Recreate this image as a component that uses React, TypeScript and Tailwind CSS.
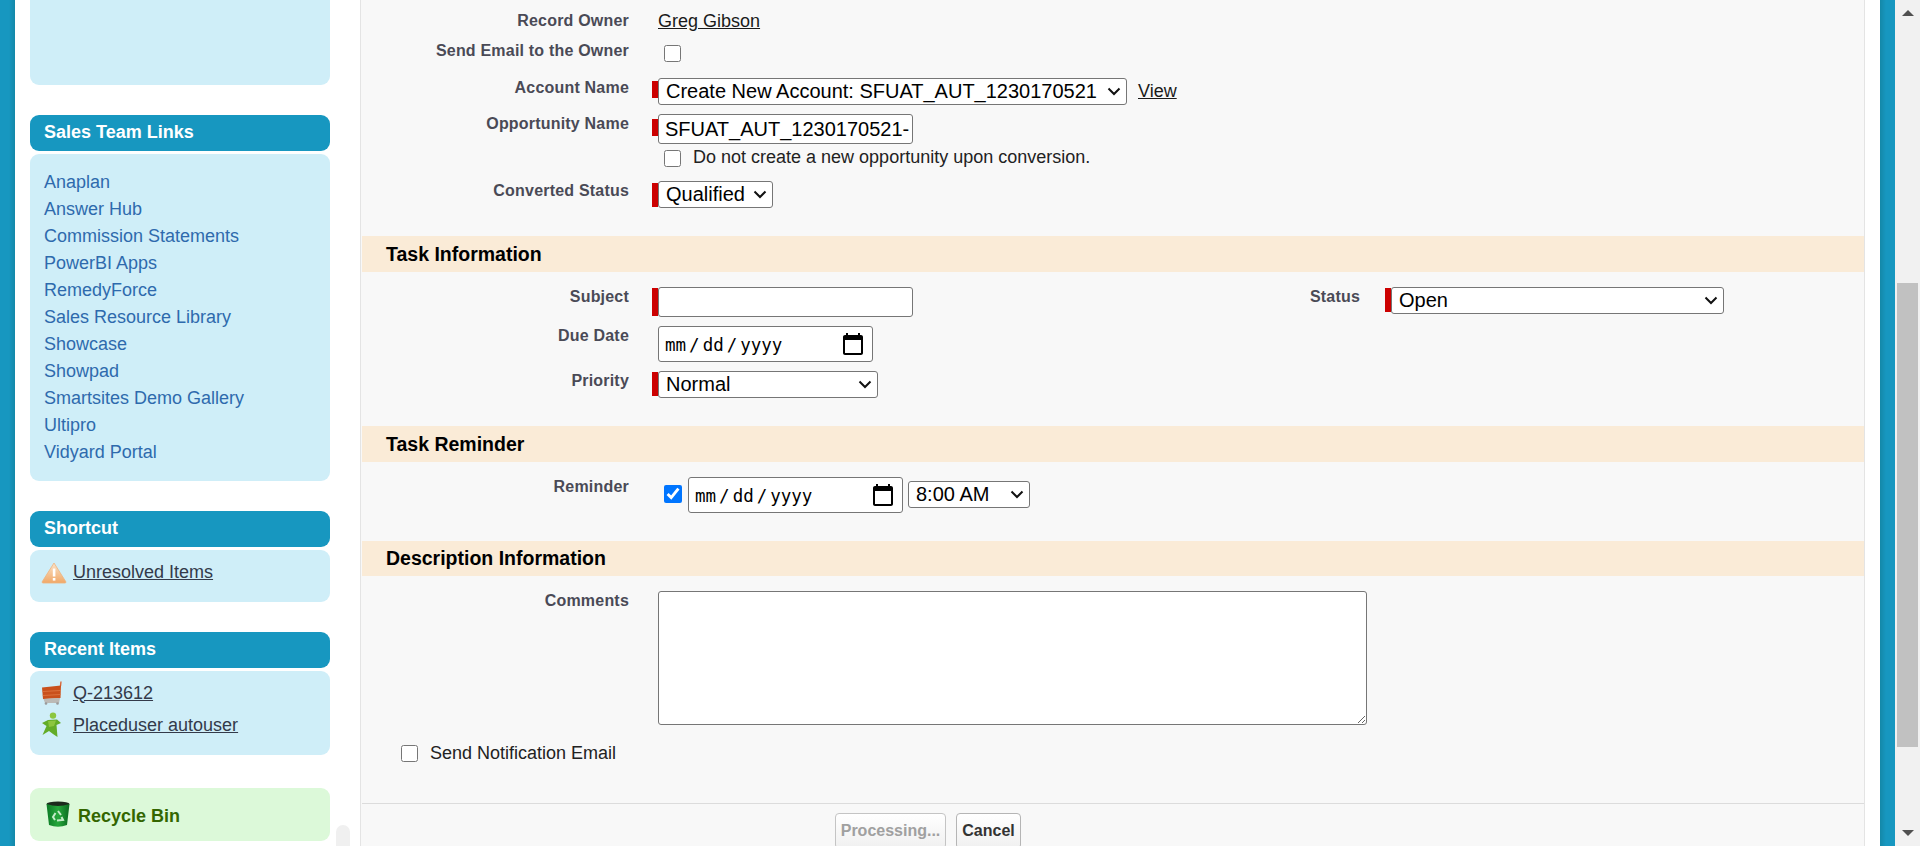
const links = [
  'Anaplan',
  'Answer Hub',
  'Commission Statements',
  'PowerBI Apps',
  'RemedyForce',
  'Sales Resource Library',
  'Showcase',
  'Showpad',
  'Smartsites Demo Gallery',
  'Ultipro',
  'Vidyard Portal',
];

const labelCls = 'shrink-0 text-right font-bold text-[16px] leading-[20px] text-[#4a4a56] tracking-[0.2px]';
const dateCls =
  "block bg-white border border-[#767676] rounded-[3px] text-[17.5px] text-black h-[36px] w-[215px] pl-[5px] pr-[6px] pt-[2px] font-['DejaVu_Sans_Mono',monospace] [&::-webkit-datetime-edit-text]:px-[2px] [&::-webkit-calendar-picker-indicator]:h-[26px] [&::-webkit-calendar-picker-indicator]:w-[26px] [&::-webkit-calendar-picker-indicator]:p-0";

const WarningIcon = () => (
  <svg width="26" height="22" viewBox="0 0 26 22" className="mt-[2px] shrink-0">
    <defs>
      <linearGradient id="warn" x1="0" y1="0" x2="0" y2="1">
        <stop offset="0" stopColor="#fbe3c8" />
        <stop offset="1" stopColor="#f0a868" />
      </linearGradient>
    </defs>
    <path d="M13 1 L25 20 Q25 21 24 21 L2 21 Q1 21 1 20 Z" fill="url(#warn)" stroke="#efb27c" strokeWidth="0.8" />
    <rect x="11.8" y="6.5" width="2.6" height="8" fill="#fff" />
    <rect x="11.8" y="16" width="2.6" height="2.6" fill="#fff" />
  </svg>
);

const CartIcon = () => (
  <svg width="22" height="24" viewBox="0 0 22 24" className="shrink-0">
    <path d="M20 0.5 L19.5 5" stroke="#d9683a" strokeWidth="1.4" />
    <path d="M1 6.5 L20 4.5 L19.5 17 L2 18 Z" fill="#c9501c" />
    <path d="M1.5 10.5 L19.8 9.5 M1.8 14.5 L19.6 13.5" stroke="#e27a45" strokeWidth="1" opacity="0.8" />
    <path d="M2.5 18 L19 17 L18 22 L4 22 Z" fill="#b9b4ae" opacity="0.9" />
    <circle cx="5" cy="22.5" r="1.3" fill="#9a9a9a" />
    <circle cx="16.5" cy="22.5" r="1.3" fill="#9a9a9a" />
  </svg>
);

const PersonIcon = () => (
  <svg width="21" height="26" viewBox="0 0 21 26" className="shrink-0">
    <circle cx="12" cy="3.6" r="3.2" fill="#8cc63f" />
    <path d="M1 11 L7 8 L16 7.5 L20 11 L15.5 13 L16.5 25 L12 22 L8 19 L1.5 23 L5.5 14 Z" fill="#63ac28" />
    <path d="M7 9 L15 8.5 L13 14 L8 15 Z" fill="#8cc63f" />
  </svg>
);

const BinIcon = () => (
  <svg width="25" height="27" viewBox="0 0 25 27" className="shrink-0">
    <defs>
      <linearGradient id="bin" x1="0" y1="0" x2="1" y2="0">
        <stop offset="0" stopColor="#0c7a26" />
        <stop offset="0.5" stopColor="#27a83c" />
        <stop offset="1" stopColor="#0a6a20" />
      </linearGradient>
    </defs>
    <ellipse cx="12" cy="3" rx="11.5" ry="2.5" fill="#1c2a1c" />
    <path d="M0.5 3 Q12 7 23.5 3 L21 24 Q12 27.5 3 24 Z" fill="url(#bin)" />
    <path d="M12 10 L15 14 M15.5 16 L17 19 L11 19.5 M9 19 L7 16 L9.5 12" stroke="#c5ecc9" strokeWidth="2" fill="none" />
  </svg>
);

const Panel = ({ title, className, children }: { title: string; className: string; children: React.ReactNode }) => (
  <div className="mt-[30px]">
    <div className="h-[36px] rounded-[9px] bg-[#1797c0] pl-[14px] font-bold text-[18px] leading-[34px] text-white">{title}</div>
    <div className={`mt-[3px] rounded-[9px] bg-[#cfeef8] ${className}`}>{children}</div>
  </div>
);

const ItemLink = ({ icon, text }: { icon: React.ReactNode; text: string }) => (
  <div className="flex items-center h-[32px]">
    <span className="flex w-[43px] pl-[11px]">{icon}</span>
    <a className="text-[18px] underline text-[#333a4a]">{text}</a>
  </div>
);

const Band = ({ title, className = 'h-[36px] leading-[36px]' }: { title: string; className?: string }) => (
  <div className={`ml-px bg-[#faebd7] pl-[24px] font-bold text-[19.5px] text-black ${className}`}>{title}</div>
);

const Row = ({ label, className, children }: { label: string; className?: string; children?: React.ReactNode }) => (
  <div className={`flex items-start ${className ?? ''}`}>
    <div className={`${labelCls} mt-px w-[268px]`}>{label}</div>
    <div className="ml-[29px] flex items-start">{children}</div>
  </div>
);

const Req = ({ className }: { className: string }) => (
  <span className={`block w-[6px] -ml-[6px] bg-[#c00] ${className}`} />
);

// native select with the larger chevron of the reference laid over it
const Select = ({ value, className }: { value: string; className: string }) => (
  <div className={`relative h-[27px] ${className}`}>
    <select className="block h-full w-full appearance-none rounded-[3px] border border-[#767676] bg-white pl-[7px] text-[20px] leading-[25px] text-black">
      <option>{value}</option>
    </select>
    <svg width="14" height="9" viewBox="0 0 14 9" className="pointer-events-none absolute right-[6px] top-[9px]">
      <path d="M1.5 1.5 L7 7 L12.5 1.5" fill="none" stroke="#111" strokeWidth="2" />
    </svg>
  </div>
);

export default function App() {
  return (
    <div className="relative flex h-[846px] overflow-hidden bg-white font-['Liberation_Sans',Arial,sans-serif]">
      <div className="w-[15px] shrink-0 bg-[linear-gradient(to_right,#1797c0_60%,#1488a8)]" />

      <aside className="relative w-[345px] shrink-0 pl-[15px] pr-[30px]">
        <div className="h-[85px] rounded-b-[9px] bg-[#cfeef8]" />
        <Panel title="Sales Team Links" className="h-[327px] pt-[15px] pl-[14px]">
          {links.map((link) => (
            <div key={link} className="h-[27px] text-[18px] leading-[27px] text-[#2e6aad]">
              {link}
            </div>
          ))}
        </Panel>
        <Panel title="Shortcut" className="h-[52px] pt-[6px]">
          <ItemLink icon={<WarningIcon />} text="Unresolved Items" />
        </Panel>
        <Panel title="Recent Items" className="h-[84px] pt-[6px]">
          <ItemLink icon={<CartIcon />} text="Q-213612" />
          <ItemLink icon={<PersonIcon />} text="Placeduser autouser" />
        </Panel>
        <div className="mt-[33px] flex h-[53px] items-center rounded-[9px] bg-[#dcf9d9] pl-[16px]">
          <BinIcon />
          <span className="ml-[7px] mt-[3px] font-bold text-[18px] text-[#336600]">Recycle Bin</span>
        </div>
        <div className="absolute left-[321px] top-[825px] h-[30px] w-[14px] rounded-t-[7px] bg-[#f0f0f0]" />
      </aside>

      <main className="w-[1505px] shrink-0 border-x border-[#e4e4e4] bg-[#f8f8f8] text-[18px] text-black">
        <div className="h-[236px] pt-[10px]">
          <Row label="Record Owner" className="h-[30px]">
            <a className="mt-px text-[18px] leading-[20px] underline text-[#1a1a1a]">Greg Gibson</a>
          </Row>
          <Row label="Send Email to the Owner" className="h-[37px]">
            <input type="checkbox" className="mt-[5px] ml-[6px] h-[17px] w-[17px]" />
          </Row>
          <Row label="Account Name" className="h-[36px]">
            <Req className="mt-[4px] h-[17px]" />
            <Select value="Create New Account: SFUAT_AUT_1230170521" className="mt-px w-[469px]" />
            <a className="ml-[11px] mt-[4px] text-[18px] leading-[20px] underline text-[#1a1a1a]">View</a>
          </Row>
          <Row label="Opportunity Name" className="h-[32px]">
            <Req className="mt-[6px] h-[17px]" />
            <input
              readOnly
              value="SFUAT_AUT_1230170521-"
              className="mt-px h-[30px] w-[255px] rounded-[3px] border border-[#767676] bg-white pl-[6px] text-[20px] text-black"
            />
          </Row>
          <Row label="" className="h-[35px]">
            <input type="checkbox" className="mt-[5px] ml-[6px] h-[17px] w-[17px]" />
            <span className="ml-[12px] mt-[2px] text-[18px] leading-[20px] text-[#222]">Do not create a new opportunity upon conversion.</span>
          </Row>
          <Row label="Converted Status" className="h-[56px]">
            <Req className="mt-[3px] h-[24px]" />
            <Select value="Qualified" className="mt-px w-[115px]" />
          </Row>
        </div>

        <Band title="Task Information" />
        <div className="h-[154px] pt-[14px]">
          <div className="flex h-[39px] items-start">
            <Row label="Subject" className="w-[754px]">
              <Req className="mt-[2px] h-[28px]" />
              <input className="mt-px h-[30px] w-[255px] rounded-[3px] border border-[#767676] bg-white" />
            </Row>
            <div className={`${labelCls} mt-px w-[245px]`}>Status</div>
            <span className="ml-[25px] mt-[2px] block h-[24px] w-[6px] bg-[#c00]" />
            <Select value="Open" className="mt-px w-[333px]" />
          </div>
          <Row label="Due Date" className="h-[45px]">
            <input type="date" className={`${dateCls} mt-px`} />
          </Row>
          <Row label="Priority" className="h-[56px]">
            <Req className="mt-[2px] h-[24px]" />
            <Select value="Normal" className="mt-px w-[220px]" />
          </Row>
        </div>

        <Band title="Task Reminder" />
        <div className="h-[79px] pt-[14px]">
          <Row label="Reminder">
            <input type="checkbox" defaultChecked className="mt-[9px] ml-[6px] h-[18px] w-[18px]" />
            <input type="date" className={`${dateCls} ml-[6px] mt-px`} />
            <Select value="8:00 AM" className="ml-[5px] mt-[5px] w-[122px]" />
          </Row>
        </div>

        <Band title="Description Information" className="h-[35px] leading-[34px]" />
        <div className="h-[227px] pt-[14px]">
          <Row label="Comments" className="h-[155px]">
            <textarea className="mt-px h-[134px] w-[709px] rounded-[3px] border border-[#767676] bg-white" />
          </Row>
          <div className="flex items-center pl-[40px]">
            <input type="checkbox" className="h-[17px] w-[17px]" />
            <span className="ml-[12px] text-[18px] leading-[17px] text-[#222]">Send Notification Email</span>
          </div>
        </div>

        <div className="ml-px flex gap-[10px] border-t border-[#dcdcdc] pl-[473px] pt-[9px]">
          <button className="h-[36px] w-[111px] rounded-[4px] border border-[#c4c4c4] bg-[linear-gradient(#fff,#f0f0f0)] font-bold text-[16px] text-[#a0a0a0]">Processing...</button>
          <button className="h-[36px] w-[65px] rounded-[4px] border border-[#b5b5b5] bg-[linear-gradient(#fff,#f0f0f0)] font-bold text-[16px] text-[#333]">Cancel</button>
        </div>
      </main>

      <div className="w-[15px] shrink-0" />
      <div className="w-[15px] shrink-0 bg-[linear-gradient(to_right,#1488a8,#1797c0_40%)]" />

      <div className="flex w-[25px] shrink-0 flex-col items-center bg-[#f1f1f1]">
        <svg width="12" height="6" viewBox="0 0 12 6" className="mt-[10px] shrink-0"><path d="M6 0 L12 6 L0 6 Z" fill="#505050" /></svg>
        <div className="mt-[267px] h-[464px] w-[21px] bg-[#c1c1c1]" />
        <svg width="12" height="6" viewBox="0 0 12 6" className="mt-[83px] shrink-0"><path d="M0 0 L12 0 L6 6 Z" fill="#505050" /></svg>
      </div>
    </div>
  );
}
